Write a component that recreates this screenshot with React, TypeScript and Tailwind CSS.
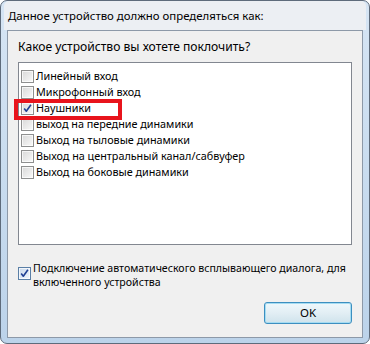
import React from "react";

function Box({ checked = false, hot = false }: { checked?: boolean; hot?: boolean }) {
  return (
    <span
      className={
        "relative inline-block w-[13px] h-[13px] shrink-0 border " +
        (hot
          ? "border-[#5a7fa6] bg-gradient-to-br from-[#c9d9ec] to-[#eef4fb]"
          : "border-[#8e8f8f] bg-gradient-to-br from-[#d8d8d8] to-[#fafafa]")
      }
    >
      <span className="absolute inset-0 border border-white/70" />
      {checked && (
        <svg className="absolute left-0 top-0" width="11" height="11" viewBox="0 0 11 11">
          <path d="M2.2 5.6 L4.3 8.2 L8.9 1.8" fill="none" stroke="#1f3f93" strokeWidth="1.6" strokeLinejoin="round" />
        </svg>
      )}
    </span>
  );
}

const items = [
  { t: "Линейный вход", c: false },
  { t: "Микрофонный вход", c: false },
  { t: "Наушники", c: true },
  { t: "выход на передние динамики", c: false },
  { t: "Выход на тыловые динамики", c: false },
  { t: "Выход на центральный канал/сабвуфер", c: false },
  { t: "Выход на боковые динамики", c: false },
];

export default function App() {
  return (
    <div
      className="relative w-[370px] h-[344px] rounded-[7px] border border-[#5e6b7b] bg-gradient-to-b from-[#d6e5f4] to-[#bcd3ea] px-[6px] pb-[5px] flex flex-col text-[12px] text-black overflow-hidden"
      style={{ fontFamily: '"Noto Sans", "Open Sans", sans-serif' }}
    >
      <div className="h-[29px] -mx-[3px] px-[4px] flex items-center bg-[#eceff3] rounded-t-[5px]">
        <span className="leading-[16px] pt-[1px] text-[11.4px]">Данное устройство должно определяться как:</span>
      </div>
      <div className="flex-1 border border-[#8d99a8] bg-[#f0f0f0] flex flex-col">
        <div className="pl-[10px] pt-[8px] leading-[16px] text-[12.1px]">Какое устройство вы хотете поклочить?</div>
        <div className="ml-[10px] mt-[7px] w-[334px] h-[183px] border border-[#828790] bg-white pt-[5px] pl-[2px] text-[10.8px]">
          {items.map((it) => (
            <div key={it.t} className="h-[16px] flex items-center gap-[2px] leading-[16px]">
              <Box checked={it.c} />
              <span>{it.t}</span>
            </div>
          ))}
        </div>
        <div className="ml-[10px] mt-[16px] flex items-start gap-[2px]">
          <span className="mt-[6px]">
            <Box checked hot />
          </span>
          <span className="leading-[14px] w-[320px] text-[10.6px]">
            Подключение автоматического всплывающего диалога, для включенного устройства
          </span>
        </div>
        <div className="mt-[13px] mr-[10px] flex justify-end">
          <button className="w-[88px] h-[22px] rounded-[3px] border border-[#3c8fc0] bg-gradient-to-b from-[#eef8fc] via-[#e2eef4] to-[#cfe3ec] shadow-[inset_0_0_0_1px_#a5dcf2] leading-[18px] text-[11.5px]">
            OK
          </button>
        </div>
      </div>
      <div className="absolute left-[13px] top-[98px] w-[108px] h-[21px] border-[4px] border-[#e8141c]" />
    </div>
  );
}
